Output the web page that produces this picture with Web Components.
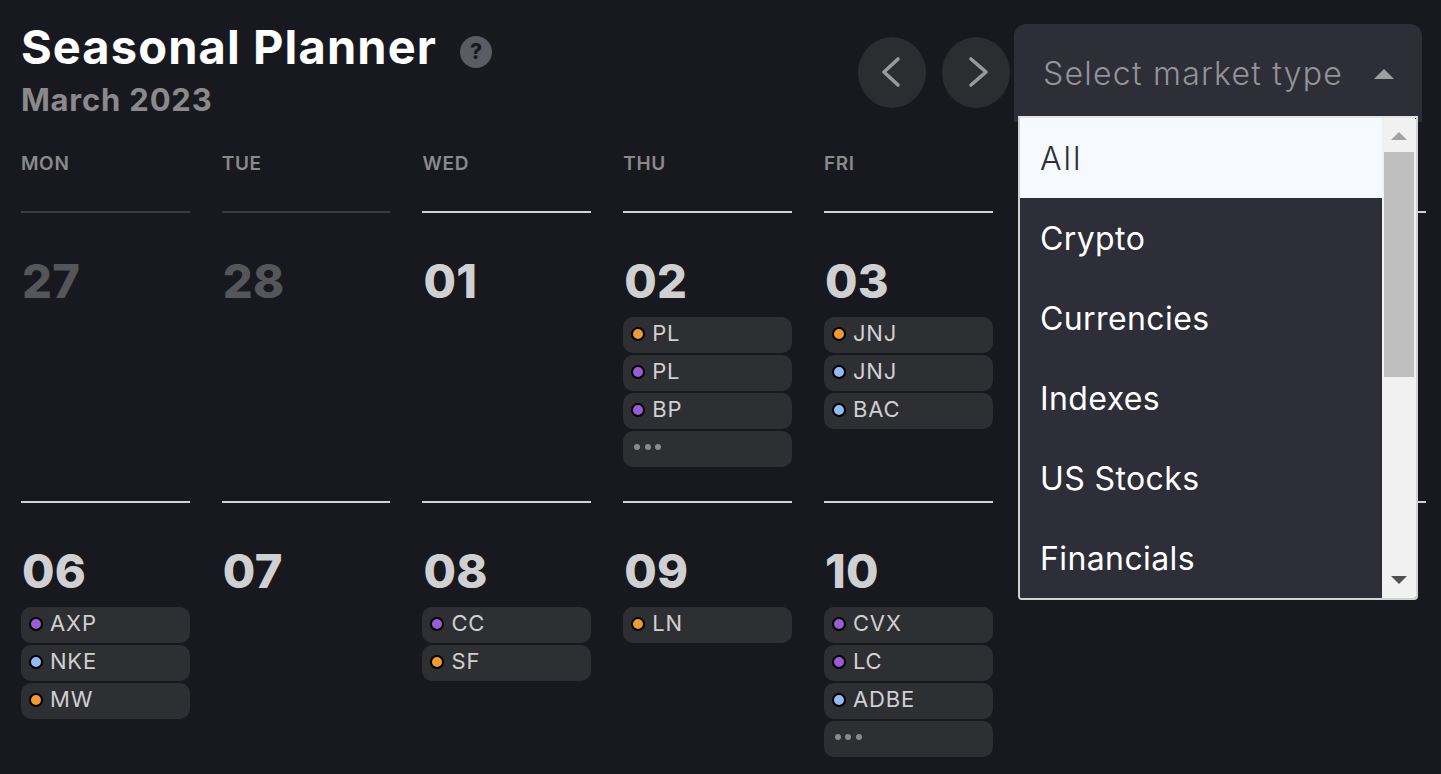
<!DOCTYPE html>
<html lang="en">
<head>
<meta charset="utf-8">
<title>Seasonal Planner</title>
<style>
  html, body { margin: 0; padding: 0; background: #18191f; overflow: hidden; }
  body { font-family: Inter, "Liberation Sans", sans-serif; color: #d0d0d2; }
</style>
</head>
<body>
<seasonal-planner>
  <planner-header slot="header" title-text="Seasonal Planner" month="March 2023"></planner-header>

  <week-day>MON</week-day><week-day>TUE</week-day><week-day>WED</week-day><week-day>THU</week-day><week-day>FRI</week-day><week-day></week-day><week-day></week-day>

  <day-cell num="27" past></day-cell>
  <day-cell num="28" past></day-cell>
  <day-cell num="01"></day-cell>
  <day-cell num="02">
    <event-chip tone="orange">PL</event-chip>
    <event-chip tone="purple">PL</event-chip>
    <event-chip tone="purple">BP</event-chip>
    <event-chip more></event-chip>
  </day-cell>
  <day-cell num="03">
    <event-chip tone="orange">JNJ</event-chip>
    <event-chip tone="blue">JNJ</event-chip>
    <event-chip tone="blue">BAC</event-chip>
  </day-cell>
  <day-cell></day-cell>
  <day-cell></day-cell>

  <day-cell num="06">
    <event-chip tone="purple">AXP</event-chip>
    <event-chip tone="blue">NKE</event-chip>
    <event-chip tone="orange">MW</event-chip>
  </day-cell>
  <day-cell num="07"></day-cell>
  <day-cell num="08">
    <event-chip tone="purple">CC</event-chip>
    <event-chip tone="orange">SF</event-chip>
  </day-cell>
  <day-cell num="09">
    <event-chip tone="orange">LN</event-chip>
  </day-cell>
  <day-cell num="10">
    <event-chip tone="purple">CVX</event-chip>
    <event-chip tone="purple">LC</event-chip>
    <event-chip tone="blue">ADBE</event-chip>
    <event-chip more></event-chip>
  </day-cell>
  <day-cell></day-cell>
  <day-cell></day-cell>
</seasonal-planner>

<script>
class SeasonalPlanner extends HTMLElement {
  constructor() {
    super();
    this.attachShadow({ mode: 'open' }).innerHTML = `
      <style>
        :host { display: block; padding: 0 15px 0 20.9px; }
        .grid {
          display: grid;
          grid-template-columns: repeat(5, 168.75px) 1fr 1fr;
          grid-template-rows: 61px 290px auto;
          column-gap: 32px;
        }
      </style>
      <slot name="header"></slot>
      <div class="grid"><slot></slot></div>
    `;
  }
}

class PlannerHeader extends HTMLElement {
  constructor() {
    super();
    this.attachShadow({ mode: 'open' }).innerHTML = `
      <style>
        :host { display: flex; justify-content: space-between; height: 150px; margin-right: 4px; box-sizing: border-box; padding-top: 24px; }
        .heading { display: flex; flex-direction: column; }
        .title-row { display: flex; align-items: center; height: 48px; }
        h1 { margin: -2px 0 0; font-size: 47px; line-height: 48px; font-weight: 700; color: #fff; letter-spacing: 1.12px; }
        .help {
          width: 32px; height: 32px; margin-left: 23px; margin-top: 7px; border-radius: 50%;
          background: #5a5b63; color: #18191f; font-size: 21px; font-weight: 800;
          display: flex; align-items: center; justify-content: center;
        }
        .month { margin-top: 10px; font-size: 31px; line-height: 36px; font-weight: 700; color: #8a8a8c; letter-spacing: .8px; }
        .tools { display: flex; align-items: flex-start; }
        nav-button + nav-button { margin-left: 16px; }
        market-select { margin-left: 4px; }
      </style>
      <div class="heading">
        <div class="title-row"><h1></h1><span class="help">?</span></div>
        <div class="month"></div>
      </div>
      <div class="tools">
        <nav-button dir="prev"></nav-button>
        <nav-button dir="next"></nav-button>
        <market-select></market-select>
      </div>
    `;
    this.shadowRoot.querySelector('h1').textContent = this.getAttribute('title-text');
    this.shadowRoot.querySelector('.month').textContent = this.getAttribute('month');
  }
}

class NavButton extends HTMLElement {
  constructor() {
    super();
    const d = this.getAttribute('dir') === 'prev' ? 'M40 22 26 35l14 13' : 'M29 22l15 13-15 13';
    this.attachShadow({ mode: 'open' }).innerHTML = `
      <style>
        :host { display: block; width: 68px; height: 71px; margin-top: 13px; border-radius: 50%; background: #2c2d31; }
        svg { display: block; }
      </style>
      <svg width="68" height="71" viewBox="0 0 68 71" fill="none">
        <path d="${d}" stroke="#9a9a9c" stroke-width="3.6" stroke-linecap="round" stroke-linejoin="round"/>
      </svg>
    `;
  }
}

class MarketSelect extends HTMLElement {
  constructor() {
    super();
    const options = ['All', 'Crypto', 'Currencies', 'Indexes', 'US Stocks', 'Financials'];
    this.attachShadow({ mode: 'open' }).innerHTML = `
      <style>
        :host { display: block; position: relative; width: 408px; height: 98px; }
        .trigger {
          height: 98px; box-sizing: border-box; padding: 0 28px 0 29px; border-radius: 12px 12px 0 0;
          background: #2d2e37; display: flex; align-items: center; justify-content: space-between;
        }
        .placeholder { font-size: 32px; font-weight: 300; color: #949497; letter-spacing: 1.25px; }
        .caret { width: 0; height: 0; border: 10px solid transparent; border-top: 0; border-bottom-color: #a0a0a2; margin-top: 2px; }
        .menu {
          position: absolute; left: 4px; top: 92px; width: 400px; height: 484px; box-sizing: border-box;
          display: flex; border: 2px solid #d2d2d2; border-top-color: #e4e4e4; border-radius: 0 0 4px 4px;
          overflow: hidden;
        }
        .options { flex: 1; background: #2d2e37; }
        .option {
          height: 80px; box-sizing: border-box; padding: 0 0 0 20px; display: flex; align-items: center;
          font-size: 32px; font-weight: 400; color: #fff; letter-spacing: .4px;
        }
        .option.active { background: #f6faff; color: #2d2e37; font-weight: 300; letter-spacing: 2px; }
        .scrollbar { width: 34px; background: #f1f1f1; display: flex; flex-direction: column; align-items: center; position: relative; }
        .scrollbar::before { content: ""; position: absolute; top: 0; right: 0; width: 1px; height: 1px; background: #000; }
        .up { height: 34px; width: 34px; display: flex; align-items: flex-start; justify-content: center; }
        .up i { display: block; margin-top: 14px; width: 0; height: 0; border: 8px solid transparent; border-top: 0; border-bottom-color: #a3a3a3; }
        .thumb { width: 30px; height: 225px; background: #bfbfbf; }
        .down { margin-top: auto; margin-bottom: 14px; width: 0; height: 0; border: 8px solid transparent; border-bottom: 0; border-top-color: #505050; }
      </style>
      <div class="trigger">
        <span class="placeholder">Select market type</span>
        <span class="caret"></span>
      </div>
      <div class="menu">
        <div class="options">
          ${options.map((o, i) => `<div class="option${i ? '' : ' active'}">${o}</div>`).join('')}
        </div>
        <div class="scrollbar">
          <div class="up"><i></i></div>
          <div class="thumb"></div>
          <div class="down"></div>
        </div>
      </div>
    `;
  }
}

class WeekDay extends HTMLElement {
  constructor() {
    super();
    this.attachShadow({ mode: 'open' }).innerHTML = `
      <style>
        :host { display: block; font-size: 19px; line-height: 28px; font-weight: 600; color: #8a8a8c; letter-spacing: .7px; }
      </style>
      <slot></slot>
    `;
  }
}

class DayCell extends HTMLElement {
  constructor() {
    super();
    this.attachShadow({ mode: 'open' }).innerHTML = `
      <style>
        :host { display: block; border-top: 2px solid #d2d2d4; padding-top: 40px; }
        :host([past]) { border-top-color: #3a3b40; }
        .num { height: 64px; margin-left: 1px; font-size: 47px; line-height: 56px; font-weight: 800; color: #d0d0d2; letter-spacing: .4px; }
        :host([past]) .num { color: #55565a; }
        .events { display: flex; flex-direction: column; gap: 2px; }
      </style>
      <div class="num"></div>
      <div class="events"><slot></slot></div>
    `;
    this.shadowRoot.querySelector('.num').textContent = this.getAttribute('num') || '';
  }
}

class EventChip extends HTMLElement {
  constructor() {
    super();
    const more = this.hasAttribute('more');
    this.attachShadow({ mode: 'open' }).innerHTML = `
      <style>
        :host { display: flex; align-items: center; height: 36px; box-sizing: border-box; padding: 0 0 4px 8px; border-radius: 10px; background: #2e2f33; font-size: 22px; color: #d0d0d2; letter-spacing: .9px; }
        .dot { width: 10px; height: 10px; border: 2px solid #000; border-radius: 50%; margin-right: 7px; margin-top: 2px; flex: none; }
        :host([tone=orange]) .dot { background: #f09a33; }
        :host([tone=purple]) .dot { background: #9a5bd6; }
        :host([tone=blue]) .dot { background: #8fbcf8; }
        .more { display: flex; gap: 4.5px; margin-left: 3px; margin-top: 0; }
        .more i { display: block; width: 6px; height: 6px; border-radius: 50%; background: #8a8a8c; }
      </style>
      ${more ? '<span class="more"><i></i><i></i><i></i></span>' : '<span class="dot"></span><slot></slot>'}
    `;
  }
}

customElements.define('nav-button', NavButton);
customElements.define('market-select', MarketSelect);
customElements.define('planner-header', PlannerHeader);
customElements.define('week-day', WeekDay);
customElements.define('event-chip', EventChip);
customElements.define('day-cell', DayCell);
customElements.define('seasonal-planner', SeasonalPlanner);
</script>
</body>
</html>
